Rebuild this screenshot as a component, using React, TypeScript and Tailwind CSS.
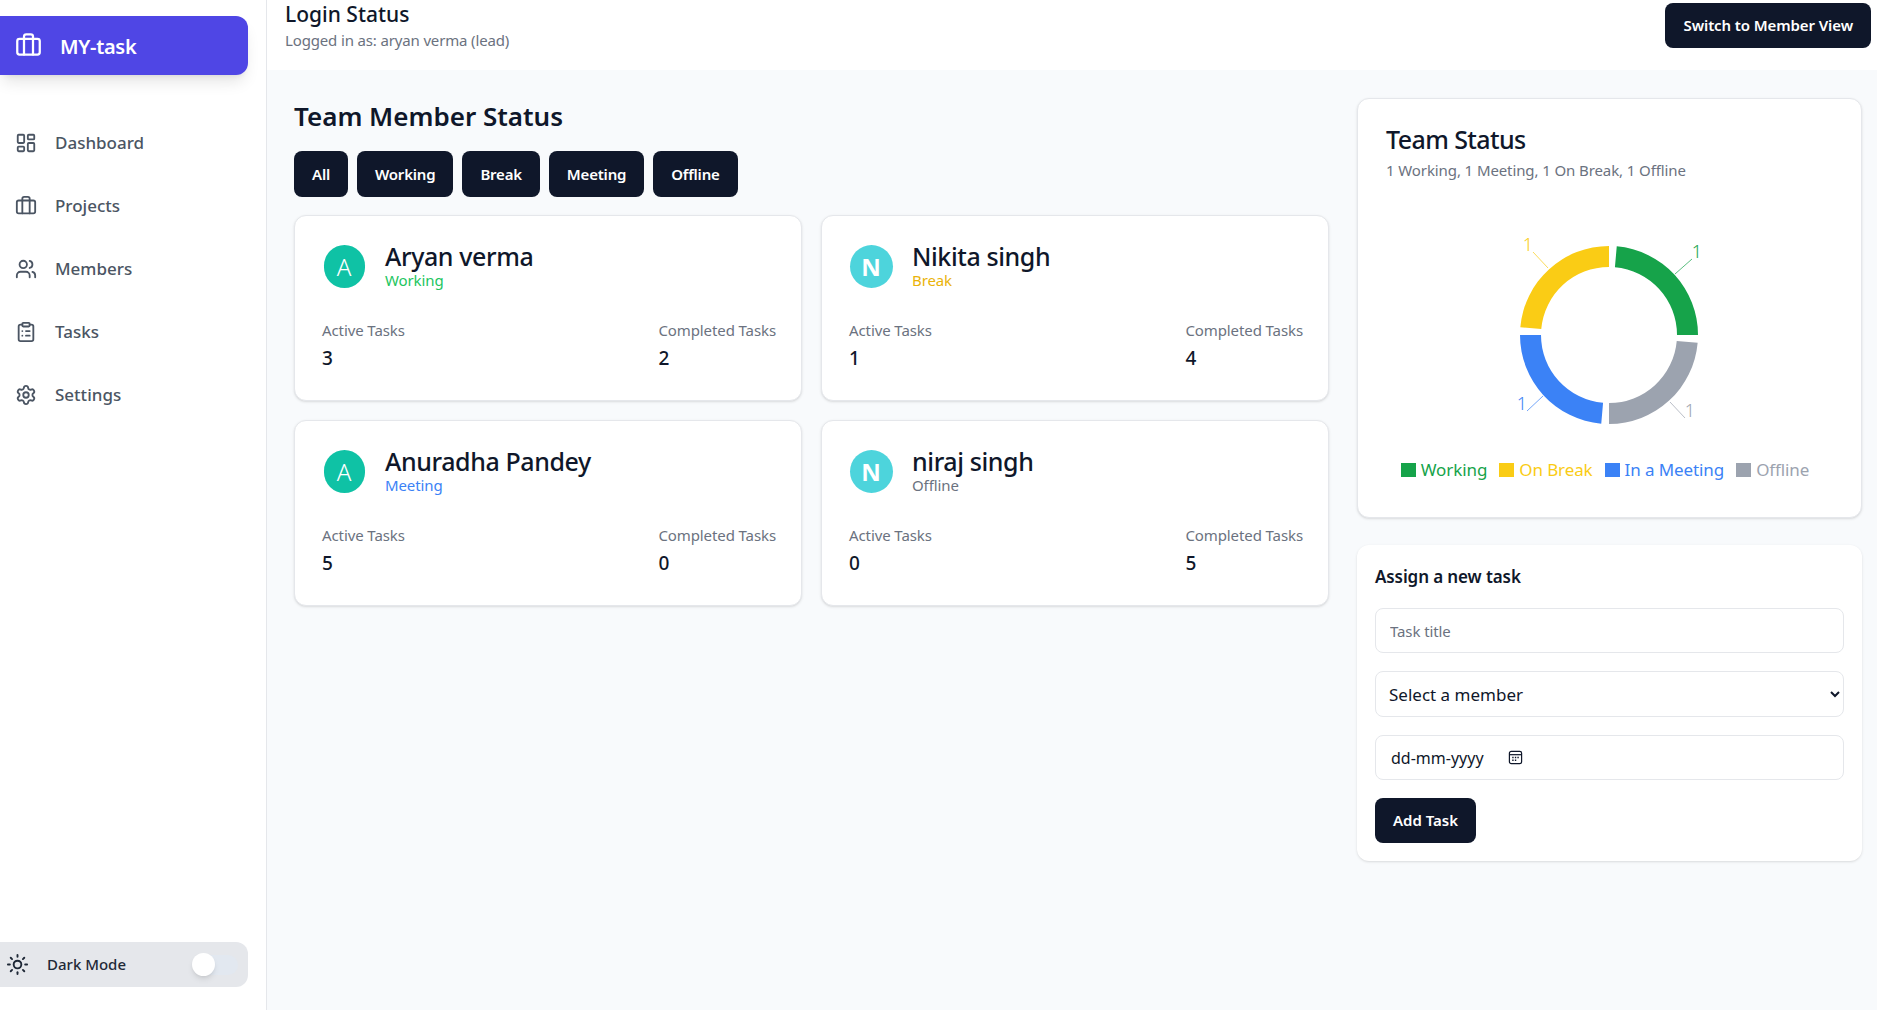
import { Briefcase, LayoutDashboard, Users, ClipboardList, Settings, Sun } from "lucide-react";

const navItems = [
  { label: "Dashboard", icon: LayoutDashboard },
  { label: "Projects", icon: Briefcase },
  { label: "Members", icon: Users },
  { label: "Tasks", icon: ClipboardList },
  { label: "Settings", icon: Settings },
];

const filters = ["All", "Working", "Break", "Meeting", "Offline"];

const members = [
  { name: "Aryan verma", status: "Working", statusColor: "text-[#22c55e]", letter: "A", avatar: "w-[41px] bg-[#0fc2a5] font-light", active: 3, done: 2 },
  { name: "Nikita singh", status: "Break", statusColor: "text-[#eab308]", letter: "N", avatar: "w-[43px] bg-[#4dd4dc] font-bold", active: 1, done: 4 },
  { name: "Anuradha Pandey", status: "Meeting", statusColor: "text-[#3b82f6]", letter: "A", avatar: "w-[41px] bg-[#0fc2a5] font-light", active: 5, done: 0 },
  { name: "niraj singh", status: "Offline", statusColor: "text-[#6b7280]", letter: "N", avatar: "w-[43px] bg-[#4dd4dc] font-bold", active: 0, done: 5 },
];

const legend = [
  { label: "Working", box: "bg-[#16a34a]", text: "text-[#16a34a]" },
  { label: "On Break", box: "bg-[#facc15]", text: "text-[#facc15]" },
  { label: "In a Meeting", box: "bg-[#3b82f6]", text: "text-[#3b82f6]" },
  { label: "Offline", box: "bg-[#9ca3af]", text: "text-[#9ca3af]" },
];

// pie is centred on 100,100 in its own box
const polar = (r: number, deg: number) => {
  const a = (deg * Math.PI) / 180;
  return [100 + r * Math.cos(a), 100 - r * Math.sin(a)];
};

function arc(from: number, to: number) {
  const [x1, y1] = polar(89, from);
  const [x2, y2] = polar(89, to);
  const [x3, y3] = polar(68, to);
  const [x4, y4] = polar(68, from);
  return `M${x1} ${y1}A89 89 0 0 1 ${x2} ${y2}L${x3} ${y3}A68 68 0 0 0 ${x4} ${y4}Z`;
}

const slices = [
  { from: 85, to: 0, color: "#16a34a", line: "M166 39L183 24", tx: 188, ty: 18 },
  { from: -5, to: -90, color: "#9ca3af", line: "M161 167L176 183", tx: 181, ty: 177 },
  { from: -95, to: -180, color: "#3b82f6", line: "M34 161L18 176", tx: 13, ty: 170 },
  { from: -185, to: -270, color: "#facc15", line: "M39 33L24 17", tx: 19, ty: 11 },
];

function DonutChart() {
  return (
    <svg width="200" height="200" viewBox="0 0 200 200" className="overflow-visible">
      {slices.map((s) => (
        <g key={s.color}>
          <path d={arc(s.from, s.to)} fill={s.color} />
          <path d={s.line} stroke={s.color} strokeOpacity="0.7" fill="none" />
          <text x={s.tx} y={s.ty} fill={s.color} fontSize="18" fontWeight="300" textAnchor="middle" dominantBaseline="middle">
            1
          </text>
        </g>
      ))}
    </svg>
  );
}

function MemberCard({ member }: { member: (typeof members)[number] }) {
  return (
    <div className="h-[186px] rounded-xl border border-[#e5e7eb] bg-white pt-[26px] pr-[25px] pl-[27px] shadow-sm">
      <div className="flex items-start">
        <div className="flex w-[44px] justify-center">
          <div className={`mt-[3px] flex h-[43px] items-center justify-center rounded-full text-[24px] text-white ${member.avatar}`}>
            {member.letter}
          </div>
        </div>
        <div className="ml-[19px]">
          <div className="text-[25px] leading-[29px] font-medium tracking-[-0.4px] text-[#0f172a]">{member.name}</div>
          <div className={`mt-[2px] text-[15px] leading-[15px] tracking-[-0.1px] ${member.statusColor}`}>{member.status}</div>
        </div>
      </div>
      <div className="mt-[32px] flex justify-between">
        <div>
          <div className="text-[15px] leading-5 tracking-[-0.1px] text-[#6b7280]">Active Tasks</div>
          <div className="mt-[4px] text-[19px] leading-7 font-medium text-[#0f172a]">{member.active}</div>
        </div>
        <div>
          <div className="text-[15px] leading-5 tracking-[-0.1px] text-[#6b7280]">Completed Tasks</div>
          <div className="mt-[4px] text-[19px] leading-7 font-medium text-[#0f172a]">{member.done}</div>
        </div>
      </div>
    </div>
  );
}

export default function App() {
  return (
    <div className="flex h-[1010px] overflow-hidden bg-[#f8fafc] font-['Noto_Sans',sans-serif]">
      {/* Sidebar */}
      <aside className="flex w-[267px] shrink-0 flex-col border-r border-[#e5e7eb] bg-white">
        <div className="mt-4 flex h-[59px] w-[248px] items-center rounded-r-xl bg-[#4f46e5] pl-[15px] text-white shadow-lg">
          <Briefcase className="h-[27px] w-[27px]" strokeWidth={2} />
          <span className="ml-[18px] pt-[2px] text-[20px] font-semibold tracking-[-0.3px]">MY-task</span>
        </div>
        <nav className="mt-[36px] flex flex-col">
          {navItems.map((item) => (
            <div key={item.label} className="flex h-[63px] items-center pl-[15px] text-[#4b5563]">
              <item.icon className="h-[22px] w-[22px]" strokeWidth={2} />
              <span className="ml-[18px] text-[17px] font-medium">{item.label}</span>
            </div>
          ))}
        </nav>
        <div className="mt-auto mb-[23px] flex h-[45px] w-[248px] items-center rounded-r-xl bg-[#e5e7eb] pl-[6px]">
          <Sun className="h-[23px] w-[23px] text-[#1f2937]" strokeWidth={2} />
          <span className="ml-[18px] text-[15px] font-medium text-[#1f2937]">Dark Mode</span>
          <div className="relative ml-auto mr-[10px] h-5 w-[44px] rounded-full bg-[#e2e8f0]">
            <div className="absolute top-[-2px] left-[-2px] h-[23px] w-[23px] rounded-full bg-white shadow-md" />
          </div>
        </div>
      </aside>

      <div className="flex min-w-0 flex-1 flex-col">
        {/* Header */}
        <header className="flex h-[70px] shrink-0 items-start justify-between bg-white pl-[18px] pr-[6px]">
          <div>
            <h1 className="text-[21px] leading-7 font-medium text-[#0f172a]">Login Status</h1>
            <p className="mt-[2px] text-[15px] leading-5 tracking-[-0.15px] text-[#6b7280]">Logged in as: aryan verma (lead)</p>
          </div>
          <button className="mt-[3px] h-[45px] rounded-lg bg-[#0f172a] px-[18px] text-[15px] font-semibold tracking-[-0.1px] text-white">
            Switch to Member View
          </button>
        </header>

        <main className="flex flex-1 gap-[28px] pt-[28px] pr-[15px] pl-[27px]">
          <section className="w-[1035px]">
            <h2 className="text-[26px] leading-9 font-semibold text-[#0f172a]">Team Member Status</h2>
            <div className="mt-[17px] flex gap-[9px]">
              {filters.map((f) => (
                <button key={f} className="h-[46px] rounded-lg bg-[#0f172a] px-[18px] text-[15px] font-semibold tracking-[-0.2px] text-white">
                  {f}
                </button>
              ))}
            </div>
            <div className="mt-[18px] grid grid-cols-2 gap-x-[19px] gap-y-[19px]">
              {members.map((m) => (
                <MemberCard key={m.name} member={m} />
              ))}
            </div>
          </section>

          <section className="flex w-[505px] flex-col gap-[27px]">
            <div className="h-[420px] rounded-xl border border-[#e5e7eb] bg-white px-7 pt-[24px] shadow-sm">
              <h2 className="text-[25px] leading-8 font-medium tracking-[-0.6px] text-[#0f172a]">Team Status</h2>
              <p className="mt-[5px] text-[15px] leading-5 tracking-[-0.1px] text-[#6b7280]">1 Working, 1 Meeting, 1 On Break, 1 Offline</p>
              <div className="mt-[55px] flex justify-center pr-[2px]">
                <DonutChart />
              </div>
              <div className="mt-[23px] flex items-center justify-center gap-[12px] pr-[9px]">
                {legend.map((l) => (
                  <div key={l.label} className="flex items-center gap-[5px]">
                    <span className={`h-[14px] w-[15px] ${l.box}`} />
                    <span className={`text-[17px] leading-6 tracking-[-0.1px] ${l.text}`}>{l.label}</span>
                  </div>
                ))}
              </div>
            </div>

            <div className="rounded-xl bg-white p-[18px] shadow">
              <h3 className="text-[17px] leading-7 font-semibold tracking-[-0.1px] text-[#0f172a]">Assign a new task</h3>
              <input
                placeholder="Task title"
                className="mt-[17px] h-[45px] w-full rounded-lg border border-[#e5e7eb] px-[14px] text-[15px] tracking-[-0.1px] placeholder:text-[#6b7280]"
              />
              <select className="mt-[18px] h-[46px] w-full rounded-lg border border-[#e5e7eb] bg-white px-[9px] text-[17px] text-[#0f172a]">
                <option>Select a member</option>
              </select>
              <div className="mt-[18px] flex h-[45px] w-full items-center rounded-lg border border-[#e5e7eb] px-[15px] text-[16px] text-[#0f172a]">
                <span>dd-mm-yyyy</span>
                <svg viewBox="0 0 16 16" className="ml-6 h-[15px] w-[15px]" fill="none" stroke="#0f172a" strokeWidth="1.3">
                  <rect x="1.5" y="1.5" width="13" height="13" rx="2" />
                  <path d="M1.5 5h13" />
                  <path d="M4.5 8h1.5M7.3 8h1.5M10 8h1.5M4.5 10.8h1.5M7.3 10.8h1.5" strokeWidth="1.6" />
                </svg>
              </div>
              <button className="mt-[18px] block h-[45px] rounded-lg bg-[#0f172a] px-[18px] text-[15px] font-semibold text-white">
                Add Task
              </button>
            </div>
          </section>
        </main>
      </div>
    </div>
  );
}
